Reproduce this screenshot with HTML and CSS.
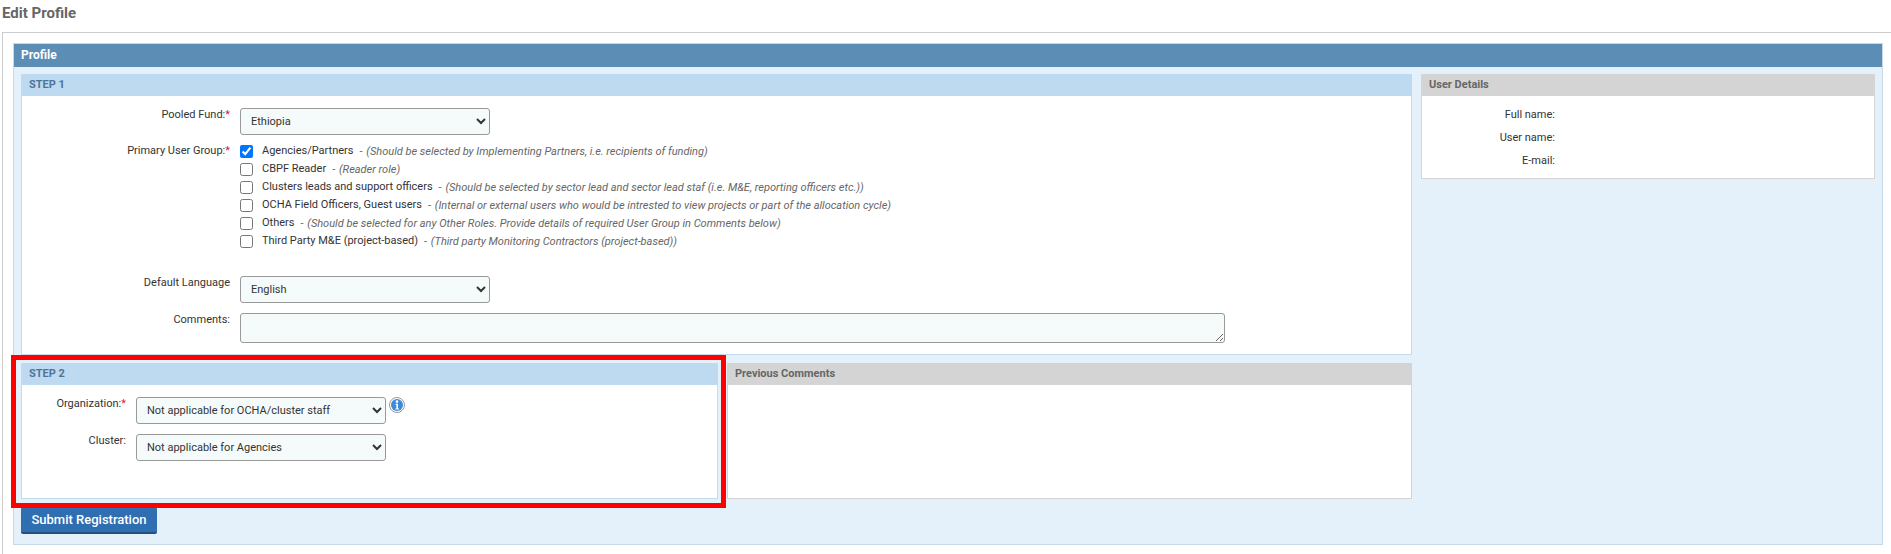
FILE: index.html
```html
<!DOCTYPE html>
<html lang="en">
<head>
    <meta charset="UTF-8">
    <title>Edit Profile</title>
    <link rel="stylesheet" href="styles.css">
</head>
<body>
    <div class="page-title">Edit Profile</div>

    <div class="page-box">
        <div class="profile">
            <div class="profile-head">Profile</div>
            <div class="profile-body">
                <div class="columns">
                    <div class="left-col">
                        <div class="step step-one">
                            <div class="step-head">STEP 1</div>
                            <div class="step-body form-wide">
                                <label class="field-label">Pooled Fund:<span class="req">*</span></label>
                                <select class="field-select"><option>Ethiopia</option></select>

                                <label class="field-label group-label">Primary User Group:<span class="req">*</span></label>
                                <div class="group-list">
                                    <div class="group-item"><input type="checkbox" checked><span class="group-name">Agencies/Partners</span><span class="group-note">- <i>(Should be selected by Implementing Partners, i.e. recipients of funding)</i></span></div>
                                    <div class="group-item"><input type="checkbox"><span class="group-name">CBPF Reader</span><span class="group-note">- <i>(Reader role)</i></span></div>
                                    <div class="group-item"><input type="checkbox"><span class="group-name">Clusters leads and support officers</span><span class="group-note">- <i>(Should be selected by sector lead and sector lead staf (i.e. M&amp;E, reporting officers etc.))</i></span></div>
                                    <div class="group-item"><input type="checkbox"><span class="group-name">OCHA Field Officers, Guest users</span><span class="group-note">- <i>(Internal or external users who would be intrested to view projects or part of the allocation cycle)</i></span></div>
                                    <div class="group-item"><input type="checkbox"><span class="group-name">Others</span><span class="group-note">- <i>(Should be selected for any Other Roles. Provide details of required User Group in Comments below)</i></span></div>
                                    <div class="group-item"><input type="checkbox"><span class="group-name">Third Party M&amp;E (project-based)</span><span class="group-note">- <i>(Third party Monitoring Contractors (project-based))</i></span></div>
                                </div>

                                <label class="field-label">Default Language</label>
                                <select class="field-select"><option>English</option></select>

                                <label class="field-label">Comments:</label>
                                <textarea class="field-text"></textarea>
                            </div>
                        </div>

                        <div class="step-row">
                            <div class="step step-two">
                                <div class="step-head">STEP 2</div>
                                <div class="step-body form-narrow">
                                    <label class="field-label">Organization:<span class="req">*</span></label>
                                    <div class="select-info">
                                        <select class="field-select"><option>Not applicable for OCHA/cluster staff</option></select>
                                        <svg class="info-icon" width="16" height="16" viewBox="0 0 16 16">
                                            <circle cx="8" cy="8" r="7.5" fill="#fff" stroke="#999"/>
                                            <circle cx="8" cy="8" r="6" fill="#3f8ad8"/>
                                            <circle cx="8" cy="4.6" r="1.3" fill="#fff"/>
                                            <path d="M6.4 6.8h2.6v4.6h1v1H6.4v-1h1v-3.600h-1z" fill="#fff"/>
                                        </svg>
                                    </div>
                                    <label class="field-label">Cluster:</label>
                                    <select class="field-select"><option>Not applicable for Agencies</option></select>
                                </div>
                                <div class="highlight-box"></div>
                            </div>
                            <div class="step step-grey step-comments">
                                <div class="step-head">Previous Comments</div>
                                <div class="step-body"></div>
                            </div>
                        </div>

                        <button class="submit-btn">Submit Registration</button>
                    </div>

                    <div class="step step-grey user-details">
                        <div class="step-head">User Details</div>
                        <div class="step-body details-list">
                            <div class="field-label">Full name:</div><div></div>
                            <div class="field-label">User name:</div><div></div>
                            <div class="field-label">E-mail:</div><div></div>
                        </div>
                    </div>
                </div>
            </div>
        </div>
    </div>
</body>
</html>
```

FILE: styles.css
```css
body {
    font-family: Roboto, sans-serif;
    font-size: 11px;
    color: #333;
    background-color: white;
    margin: 0;
    overflow: hidden;
}
.page-title {
    height: 32px;
    line-height: 26px;
    padding-left: 2px;
    font-size: 15px;
    font-weight: bold;
    color: #666;
}
.page-box {
    margin-left: 2px;
    border-top: 1px solid #ccc;
    border-left: 1px solid #ccc;
    padding: 10px 8px 10px 10px;
}
.profile {
    border: 1px solid #c5d9e8;
    background-color: #e4f1fa;
}
.profile-head {
    height: 23px;
    line-height: 23px;
    padding-left: 7px;
    background-color: #5b8db5;
    color: white;
    font-size: 12px;
    font-weight: bold;
}
.profile-body {
    padding: 7px 7px 10px 7px;
}
.columns {
    display: flex;
    gap: 9px;
    align-items: flex-start;
}
.left-col {
    width: 1391px;
    display: flex;
    flex-direction: column;
    gap: 8px;
}
.step {
    position: relative;
    display: flex;
    flex-direction: column;
}
.step-head {
    height: 22px;
    line-height: 22px;
    padding-left: 8px;
    font-size: 11px;
    font-weight: bold;
    background-color: #bedaf0;
    color: #4f7498;
}
.step-body {
    flex-grow: 1;
    background-color: white;
    border: 1px solid #c5dcee;
    border-top: 0;
}
.step-grey .step-head {
    background-color: #d4d4d4;
    color: #666;
}
.step-grey .step-body {
    border-color: #d4d4d4;
}
.step-one {
    height: 281px;
}
.step-row {
    display: flex;
    gap: 9px;
    height: 136px;
}
.step-two {
    width: 697px;
}
.step-comments {
    width: 685px;
}
.user-details {
    width: 454px;
    height: 105px;
}
.form-wide,
.form-narrow {
    display: grid;
    column-gap: 10px;
    align-content: start;
    padding-top: 12px;
}
.form-wide {
    grid-template-columns: 208px 1fr;
}
.form-narrow {
    grid-template-columns: 104px 1fr;
    row-gap: 10px;
}
.field-label {
    line-height: 14px;
    text-align: right;
    color: #333;
}
.req {
    color: #e02020;
}
.field-select {
    display: block;
    width: 250px;
    height: 27px;
    padding-left: 6px;
    font-family: Roboto, sans-serif;
    font-size: 11px;
    color: #333;
    background-color: #f5fbfb;
    border: 1px solid #999;
    border-radius: 3px;
}
.form-wide .field-select {
    margin-bottom: 6px;
}
.group-label {
    padding-top: 3px;
}
.group-list {
    margin-bottom: 27px;
}
.group-item {
    display: flex;
    align-items: center;
    height: 18px;
}
.group-item input {
    margin: 3px 9px 0 0;
    width: 13px;
    height: 13px;
}
.group-name {
    margin-right: 6px;
}
.group-note {
    margin-top: 2px;
    color: #666;
}
.group-note i {
    margin-left: 1px;
}
.field-text {
    display: block;
    box-sizing: border-box;
    width: 985px;
    height: 30px;
    background-color: #f5fbfb;
    border: 1px solid #999;
    border-radius: 3px;
}
.form-wide .field-select:nth-of-type(2) {
    margin-bottom: 10px;
}
.select-info {
    display: flex;
    gap: 3px;
    align-items: flex-start;
}
.highlight-box {
    position: absolute;
    left: -10px;
    top: -8px;
    width: 715px;
    height: 153px;
    box-sizing: border-box;
    border: 5px solid #ff0000;
}
.submit-btn {
    align-self: flex-start;
    width: 136px;
    height: 27px;
    padding: 0;
    font-family: Roboto, sans-serif;
    font-size: 13px;
    font-weight: 500;
    color: white;
    background-color: #2f6eb0;
    border: 0;
    border-bottom: 2px solid #1f5080;
    border-radius: 2px;
}
.details-list {
    display: grid;
    grid-template-columns: 133px 1fr;
    row-gap: 9px;
    align-content: start;
    padding-top: 12px;
}
```
